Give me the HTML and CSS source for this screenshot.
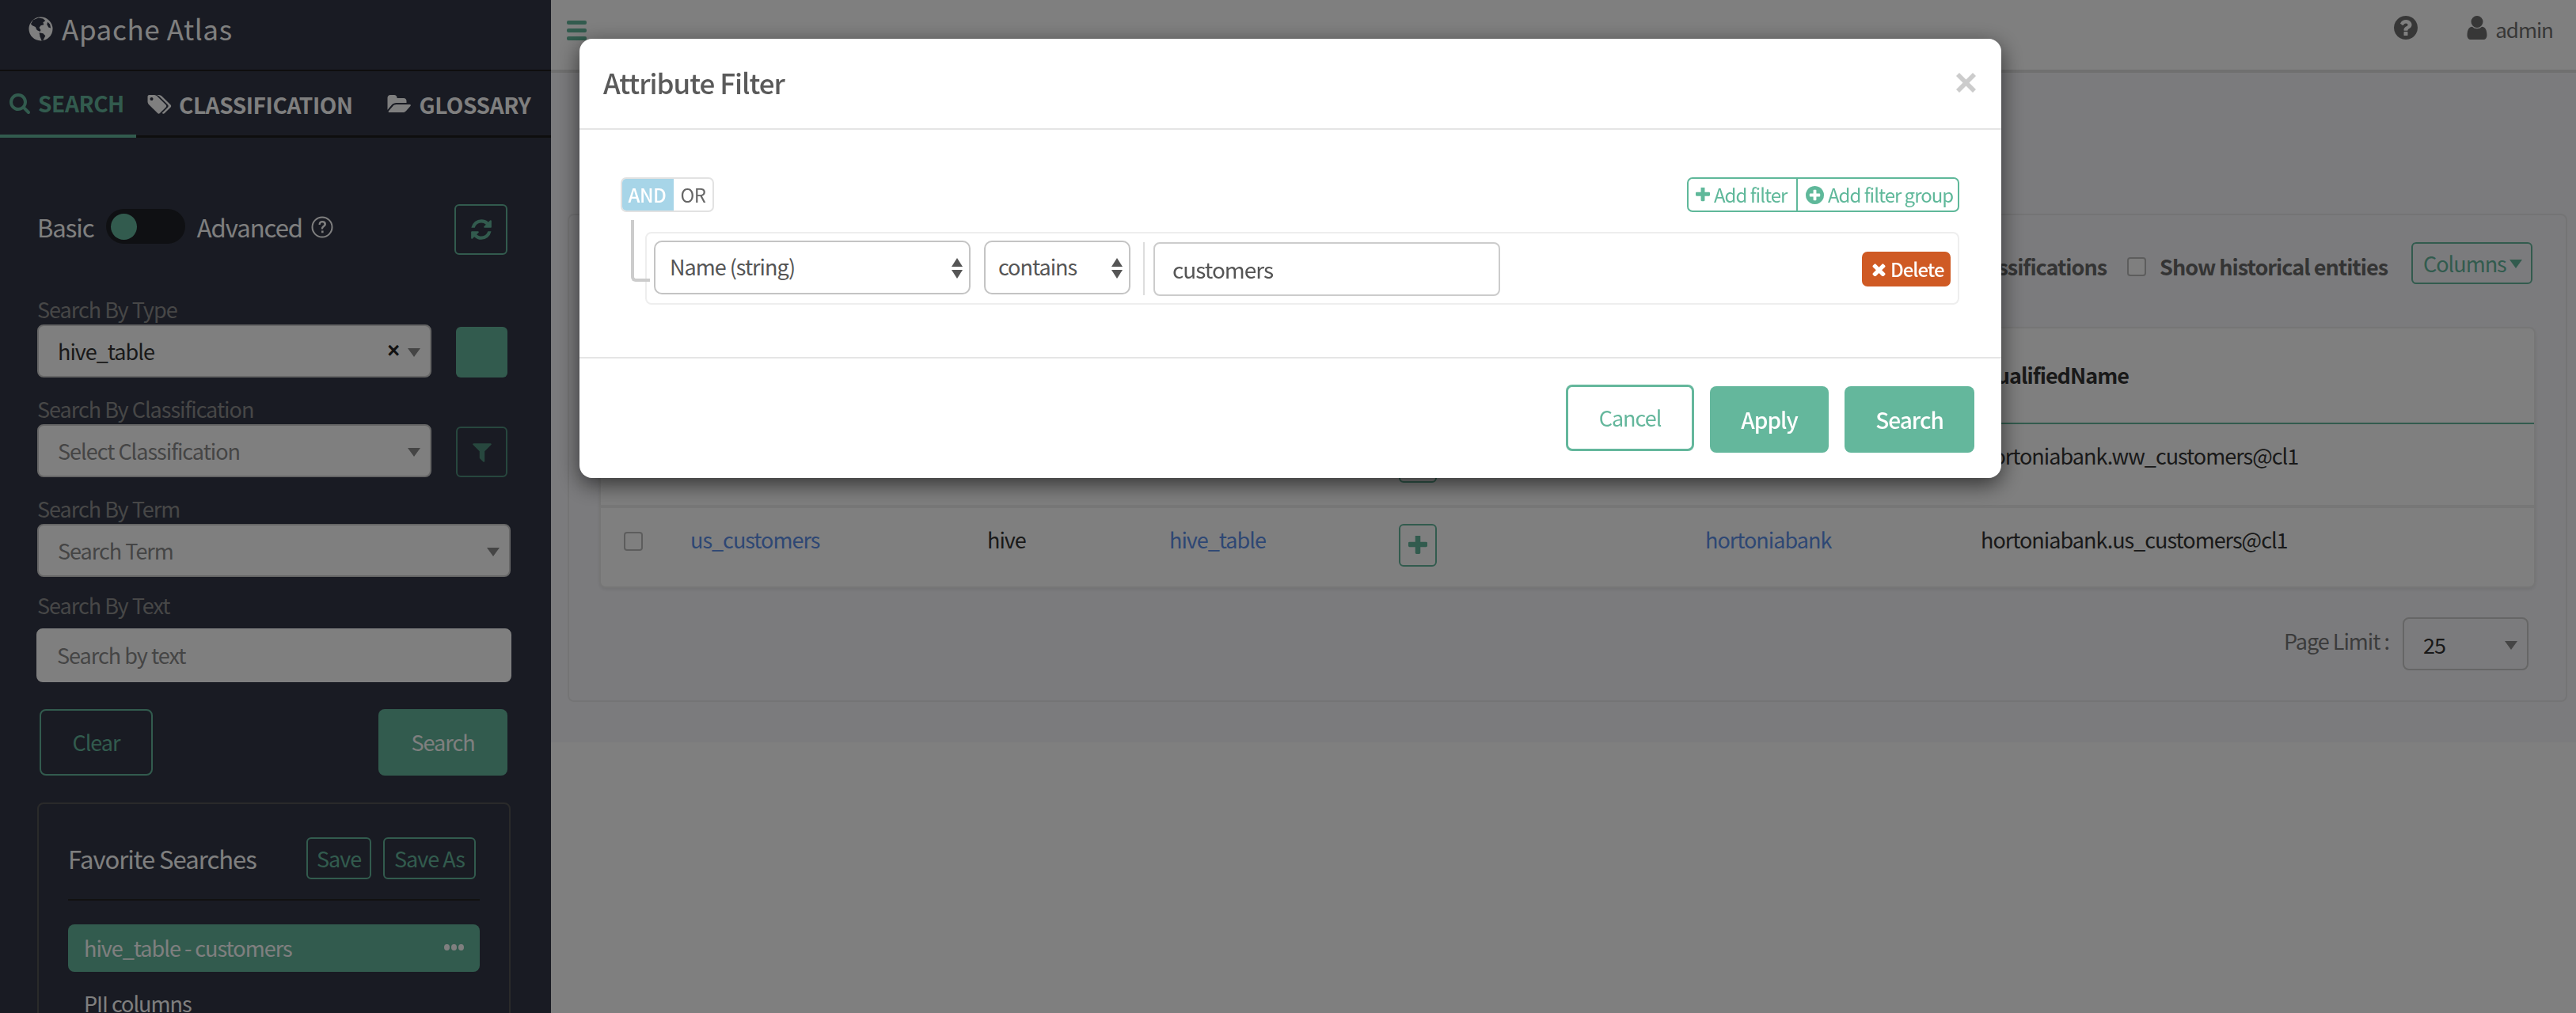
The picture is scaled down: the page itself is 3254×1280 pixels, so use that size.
FILE: index.html
```html
<!DOCTYPE html>
<html lang="en">
<head>
  <meta charset="UTF-8" />
  <title>Apache Atlas</title>
  <link rel="stylesheet" href="styles.css">
</head>
<body>
  <div class="app">
    <aside class="sidebar">
      <div class="brand">
        <svg class="globe" viewBox="0 0 32 32"><circle cx="16" cy="16" r="15.5" fill="#fff"/><path d="M13 1.500l6 1 3 3-3 2 1 3-4 1-2 3 2 3-1 2-4-2-2-4-4-2-2-2 3-5z" fill="#323746"/><path d="M14 21l5 1 3 3-3 6-2 0-2-5z" fill="#323746"/><path d="M25 7l3 3 1 5-3-1-2-4z" fill="#323746"/></svg>
        <span class="brand-name">Apache Atlas</span>
      </div>
      <nav class="tabs">
        <a class="tab tab-search active"><svg class="ico" viewBox="0 0 1792 1792"><path d="M1216 832q0-185-131.500-316.500t-316.500-131.500-316.500 131.500-131.500 316.500 131.500 316.500 316.500 131.500 316.500-131.500 131.500-316.500zm512 832q0 52-38 90t-90 38q-54 0-90-38l-343-342q-179 124-399 124-143 0-273.500-55.500t-225-150-150-225-55.500-273.500 55.500-273.500 150-225 225-150 273.500-55.500 273.500 55.500 225 150 150 225 55.500 273.500q0 220-124 399l343 343q37 37 37 90z"/></svg>SEARCH</a>
        <a class="tab tab-class"><svg class="ico" viewBox="0 0 1984 1792"><path d="M512 448q0-53-37.500-90.500t-90.500-37.500-90.500 37.500-37.500 90.500 37.500 90.500 90.500 37.500 90.500-37.500 37.500-90.500zm1067 576q0 53-37 90l-491 492q-39 37-91 37-53 0-90-37l-715-716q-38-37-64.500-101t-26.500-117v-416q0-52 38-90t90-38h416q53 0 117 26.500t102 64.500l715 714q37 39 37 91zm384 0q0 53-37 90l-491 492q-39 37-91 37-36 0-59-14t-53-45l470-470q37-37 37-90 0-52-37-91l-715-714q-38-38-102-64.500t-117-26.500h224q53 0 117 26.500t102 64.500l715 714q37 39 37 91z"/></svg>CLASSIFICATION</a>
        <a class="tab tab-gloss"><svg class="ico" viewBox="0 0 1920 1792"><path d="M1879 952q0 31-31 66l-336 396q-43 51-120.500 86.500t-143.500 35.500h-1088q-34 0-60.500-13t-26.500-43q0-31 31-66l336-396q43-51 120.500-86.500t143.500-35.500h1088q34 0 60.500 13t26.500 43zm-343-344v160h-832q-94 0-197 47.500t-164 119.500l-337 396-5 6q0-4-.5-12.500t-.5-12.500v-960q0-92 66-158t158-66h320q92 0 158 66t66 158v32h544q92 0 158 66t66 158z"/></svg>GLOSSARY</a>
      </nav>
      <div class="side-body">
        <div class="mode-row">
          <span class="mode-label">Basic</span>
          <span class="switch"><span class="knob"></span></span>
          <span class="mode-label adv">Advanced</span>
          <svg class="q-outline" viewBox="0 0 28 28"><circle cx="14" cy="14" r="12.500" fill="none" stroke="#fff" stroke-width="2"/><path d="M9.500 11q0-5 4.700-5 4.800 0 4.800 4.300 0 2.400-2.500 3.700-1.500.8-1.500 2.500h-2.300q0-3 2-4.300 1.700-1 1.700-2 0-1.900-2.600-1.900-2 0-2.200 2.700zM13 18.500h2.600v2.800H13z" fill="#fff"/></svg>
          <button class="btn-square outline refresh"><svg class="ico" viewBox="0 0 1792 1792"><path d="M1639 1056q0 5-1 7-64 268-268 434.500t-478 166.500q-146 0-282.500-55t-243.500-157l-129 129q-19 19-45 19t-45-19-19-45v-448q0-26 19-45t45-19h448q26 0 45 19t19 45-19 45l-137 137q71 66 161 102t187 36q134 0 250-65t186-179q11-17 53-117 8-23 30-23h192q13 0 22.500 9.500t9.500 22.500zm25-800v448q0 26-19 45t-45 19h-448q-26 0-45-19t-19-45 19-45l138-138q-148-137-349-137-134 0-250 65t-186 179q-11 17-53 117-8 23-30 23h-199q-13 0-22.500-9.500t-9.500-22.500v-7q65-268 270-434.500t480-166.500q146 0 284 55.500t245 156.500l130-129q19-19 45-19t45 19 19 45z"/></svg></button>
        </div>

        <div class="field first">
          <label class="field-label">Search By Type</label>
          <div class="field-row">
            <div class="combo short value">hive_table<span class="clear-x">×</span><i class="caret"></i></div>
            <button class="btn-square solid"></button>
          </div>
        </div>
        <div class="field">
          <label class="field-label">Search By Classification</label>
          <div class="field-row">
            <div class="combo short">Select Classification<i class="caret"></i></div>
            <button class="btn-square outline dim"><svg class="ico" viewBox="0 0 1792 1792"><path d="M1595 295q17 41-14 70l-493 493v742q0 42-39 59-13 5-25 5-27 0-45-19l-256-256q-19-19-19-45v-486l-493-493q-31-29-14-70 17-39 59-39h1280q42 0 59 39z"/></svg></button>
          </div>
        </div>
        <div class="field">
          <label class="field-label">Search By Term</label>
          <div class="combo">Search Term<i class="caret"></i></div>
        </div>
        <div class="field text-field">
          <label class="field-label">Search By Text</label>
          <div class="combo plain">Search by text</div>
        </div>

        <div class="side-actions">
          <button class="btn outline clear-btn">Clear</button>
          <button class="btn solid search-btn">Search</button>
        </div>

        <section class="favs">
          <div class="favs-head">
            <h3>Favorite Searches</h3>
            <button class="btn-small save">Save</button>
            <button class="btn-small save-as">Save As</button>
          </div>
          <ul class="favs-list">
            <li class="selected">hive_table - customers<span class="dots"><b></b><b></b><b></b></span></li>
            <li>PII columns</li>
          </ul>
        </section>
      </div>
    </aside>

    <main class="main">
      <header class="topbar">
        <span class="burger"><b></b><b></b><b></b></span>
        <svg class="help" viewBox="128 128 1536 1536"><path d="M1024 1376v-192q0-14-9-23t-23-9h-192q-14 0-23 9t-9 23v192q0 14 9 23t23 9h192q14 0 23-9t9-23zm256-672q0-88-55.500-163t-138.500-116-170-41q-243 0-371 213-15 24 8 42l132 100q7 6 19 6 16 0 25-12 53-68 86-92 34-24 86-24 48 0 85.500 26t37.500 59q0 38-20 61t-68 45q-63 28-115.500 86.500t-52.500 125.500v36q0 14 9 23t23 9h192q14 0 23-9t9-23q0-19 21.500-49.500t54.500-49.500q32-18 49-28.500t46-35 44.500-48 28-60.500 12.500-81zm384 192q0 209-103 385.500t-279.500 279.500-385.500 103-385.500-103-279.500-279.500-103-385.500 103-385.500 279.500-279.500 385.500-103 385.500 103 279.500 279.500 103 385.500z"/></svg>
        <svg class="user" viewBox="256 128 1280 1536"><path d="M1536 1399q0 109-62.500 187t-150.500 78h-854q-88 0-150.500-78t-62.500-187q0-85 8.500-160.500t31.500-152 58.500-131 94-89 134.500-34.500q131 128 313 128t313-128q76 0 134.500 34.500t94 89 58.500 131 31.500 152 8.500 160.500zm-256-887q0 159-112.500 271.500t-271.500 112.500-271.500-112.500-112.500-271.500 112.500-271.500 271.500-112.500 271.500 112.500 112.500 271.500z"/></svg>
        <span class="username">admin</span>
      </header>

      <div class="content">
        <section class="card">
          <div class="toolbar">
            <span class="check"></span><span class="tool-label">Exclude sub-classifications</span>
            <span class="check hist"></span><span class="tool-label">Show historical entities</span>
            <button class="columns">Columns<i class="caret up"></i></button>
          </div>
          <div class="results">
            <div class="row head">
              <span></span><span>Name</span><span>Owner</span><span>Type</span><span>Classifications</span><span>DB</span><span>QualifiedName</span>
            </div>
            <div class="row">
              <span class="check"></span><a>ww_customers</a><span>hive</span><a>hive_table</a><span><button class="add"><svg viewBox="192 192 1408 1408"><path d="M1600 736v192q0 40-28 68t-68 28h-416v416q0 40-28 68t-68 28h-192q-40 0-68-28t-28-68v-416h-416q-40 0-68-28t-28-68v-192q0-40 28-68t68-28h416v-416q0-40 28-68t68-28h192q40 0 68 28t28 68v416h416q40 0 68 28t28 68z"/></svg></button></span><a>hortoniabank</a><span>hortoniabank.ww_customers@cl1</span>
            </div>
            <div class="row last">
              <span class="check"></span><a>us_customers</a><span>hive</span><a>hive_table</a><span><button class="add"><svg viewBox="192 192 1408 1408"><path d="M1600 736v192q0 40-28 68t-68 28h-416v416q0 40-28 68t-68 28h-192q-40 0-68-28t-28-68v-416h-416q-40 0-68-28t-28-68v-192q0-40 28-68t68-28h416v-416q0-40 28-68t68-28h192q40 0 68 28t28 68v416h416q40 0 68 28t28 68z"/></svg></button></span><a>hortoniabank</a><span>hortoniabank.us_customers@cl1</span>
            </div>
          </div>
          <div class="pager">
            <span class="pager-label">Page Limit :</span>
            <div class="page-size">25<i class="caret"></i></div>
          </div>
        </section>
      </div>
    </main>
  </div>

  <div class="backdrop"></div>

  <div class="modal">
    <div class="modal-head">
      <h2>Attribute Filter</h2>
      <svg class="modal-close" viewBox="0 0 25 25"><path d="M4 0l8.500 8.500L21 0l4 4-8.500 8.500L25 21l-4 4-8.500-8.500L4 25l-4-4 8.500-8.500L0 4z"/></svg>
    </div>
    <div class="modal-body">
      <div class="group-bar">
        <div class="conds"><span class="cond on">AND</span><span class="cond">OR</span></div>
        <div class="adders">
          <a class="adder first-add"><svg viewBox="192 192 1408 1408"><path d="M1600 736v192q0 40-28 68t-68 28h-416v416q0 40-28 68t-68 28h-192q-40 0-68-28t-28-68v-416h-416q-40 0-68-28t-28-68v-192q0-40 28-68t68-28h416v-416q0-40 28-68t68-28h192q40 0 68 28t28 68v416h416q40 0 68 28t28 68z"/></svg>Add filter</a>
          <a class="adder"><svg class="round" viewBox="128 128 1536 1536"><path d="M1344 960v-128q0-26-19-45t-45-19h-256v-256q0-26-19-45t-45-19h-128q-26 0-45 19t-19 45v256h-256q-26 0-45 19t-19 45v128q0 26 19 45t45 19h256v256q0 26 19 45t45 19h128q26 0 45-19t19-45v-256h256q26 0 45-19t19-45zm320-64q0 209-103 385.500t-279.500 279.500-385.500 103-385.500-103-279.500-279.500-103-385.500 103-385.500 279.500-279.500 385.500-103 385.500 103 279.500 279.500 103 385.500z"/></svg>Add filter group</a>
        </div>
      </div>
      <div class="rule">
        <div class="pick pick-attr">Name (string)<i class="spin"></i></div>
        <div class="pick pick-op">contains<i class="spin"></i></div>
        <div class="rule-sep"></div>
        <div class="rule-input">customers</div>
        <button class="delete"><svg viewBox="266 266 1260 1260"><path d="M1490 1322q0 40-28 68l-136 136q-28 28-68 28t-68-28l-294-294-294 294q-28 28-68 28t-68-28l-136-136q-28-28-28-68t28-68l294-294-294-294q-28-28-28-68t28-68l136-136q28-28 68-28t68 28l294 294 294-294q28-28 68-28t68 28l136 136q28 28 28 68t-28 68l-294 294 294 294q28 28 28 68z"/></svg>Delete</button>
      </div>
    </div>
    <div class="modal-foot">
      <button class="foot-btn cancel">Cancel</button>
      <button class="foot-btn apply">Apply</button>
      <button class="foot-btn run">Search</button>
    </div>
  </div>
</body>
</html>
```

FILE: styles.css
```css
* { box-sizing: border-box; margin: 0; padding: 0; }
html, body { height: 100%; overflow: hidden; }
body { font-family: "Noto Sans CJK SC", "Noto Sans", sans-serif; background: #fff; color: #333; font-size: 27px; line-height: 40px; letter-spacing: -1px; }
button { font: inherit; letter-spacing: inherit; background: none; border: none; }
ul { list-style: none; }
.app { display: flex; height: 1280px; }

/* sidebar */
.sidebar { width: 696px; flex: none; background: #323746; color: #fff; overflow: hidden; }
.brand { height: 90px; border-bottom: 2px solid #1c1c1c; display: flex; align-items: center; padding: 0 0 16px 36px; }
.globe { width: 31px; height: 31px; margin-right: 11px; }
.brand-name { font-size: 35px; letter-spacing: .6px; line-height: 40px; }
.tabs { height: 84px; border-bottom: 3px solid #1c1c1c; display: flex; }
.tab { height: 84px; display: flex; align-items: center; font-size: 28px; font-weight: 700; letter-spacing: -.4px; fill: #fff; }
.tab .ico { width: 28px; height: 28px; margin-right: 9px; }
.tab-search { width: 172px; padding-left: 11px; color: #64b79c; fill: #64b79c; border-bottom: 4px solid #64b79c; }
.tab-class { margin-left: 13px; }
.tab-class .ico { width: 32px; }
.tab-gloss { margin-left: 44px; }
.tab-gloss .ico { width: 31px; }
.side-body { padding: 84px 0 0 47px; width: 645px; }
.mode-row { display: flex; align-items: center; height: 64px; width: 594px; }
.mode-label { font-size: 31px; line-height: 40px; margin-top: -6px; }
.switch { width: 100px; height: 44px; background: #1f2026; border-radius: 22px; margin: -8px 15px 0; padding: 6px; }
.knob { display: block; width: 33px; height: 33px; background: #64b79c; border-radius: 50%; }
.q-outline { width: 28px; height: 28px; margin: -6px 0 0 11px; }
.btn-square { width: 65px; height: 64px; border-radius: 6px; display: flex; align-items: center; justify-content: center; margin-left: auto; flex: none; }
.btn-square .ico { width: 30px; height: 30px; fill: #64b79c; }
.outline { border: 2px solid #64b79c; color: #64b79c; }
.solid { background: #64b79c; }
.dim { border-color: #4f8f7c; }
.dim .ico { fill: #4f8f7c; }
.refresh { width: 67px; }

.field { margin-top: 21px; width: 598px; }
.field.first { margin-top: 50px; }
.field.text-field { margin-top: 17px; }
.field.text-field .field-label { margin-bottom: 10px; }
.field-label { display: block; line-height: 38px; color: #8e8e8e; }
.field-row { display: flex; align-items: flex-end; width: 594px; }
.combo { position: relative; height: 67px; background: #fff; border: 2px solid #ccc; border-radius: 8px; padding-left: 24px; line-height: 63px; color: #8a8a8a; }
.combo.short { width: 498px; }
.combo.value { color: #333; }
.combo.plain { height: 68px; width: 600px; margin-left: -1px; border-color: #fff; line-height: 64px; }
.caret { position: absolute; right: 12px; top: 28px; width: 0; height: 0; border: 8px solid transparent; border-top: 11px solid #8a8a8a; border-bottom: 0; }
.clear-x { position: absolute; right: 39px; top: 0; color: #222; font-family: "Liberation Sans", sans-serif; font-weight: 700; font-size: 27px; }

.side-actions { display: flex; justify-content: space-between; margin: 34px 0 0 3px; width: 591px; align-items: flex-start; }
.btn { border-radius: 8px; height: 84px; }
.clear-btn { width: 143px; }
.search-btn { width: 163px; color: #fff; }
.favs { margin-top: 34px; width: 598px; height: 300px; border: 2px solid #555; border-radius: 8px; padding: 42px 37px 0 37px; }
.favs-head { display: flex; align-items: center; height: 53px; }
.favs-head h3 { font-size: 31px; font-weight: 400; line-height: 40px; margin-right: auto; }
.btn-small { height: 53px; border: 2px solid #64b79c; border-radius: 6px; color: #64b79c; line-height: 40px; }
.save { width: 82px; }
.save-as { width: 117px; margin: 0 5px 0 15px; }
.favs-list { border-top: 2px solid #222; margin-top: 25px; padding-top: 30px; }
.favs-list li { height: 60px; margin-bottom: 10px; padding-left: 20px; line-height: 60px; border-radius: 8px; position: relative; }
.favs-list li:last-child { padding-top: 18px; line-height: 24px; }
.favs-list .selected { background: #64b79c; }
.dots { position: absolute; right: 20px; top: 25px; display: flex; gap: 2px; }
.dots b { width: 7px; height: 8px; background: #fff; border-radius: 50%; }

/* main */
.main { flex: 1; min-width: 0; }
.topbar { height: 92px; background: #fff; border-bottom: 4px solid #e0e0e0; display: flex; align-items: flex-start; padding: 20px 29px 0 20px; }
.burger { display: flex; flex-direction: column; gap: 5px; width: 25px; margin: 6px auto 0 0; }
.burger b { height: 5px; background: #64b79c; border-radius: 2px; }
.help { width: 30px; height: 30px; fill: #6e6e6e; margin-right: 62px; }
.user { width: 26px; height: 30px; fill: #6e6e6e; margin-right: 10px; }
.username { font-size: 26px; line-height: 36px; color: #6e6e6e; margin-top: -1px; }
.content { background: #f7f7fb; padding: 178px 11px 51px 21px; }
.card { height: 617px; border: 2px solid #e8e8ea; border-radius: 8px; padding: 0 38px; }
.toolbar { height: 141px; padding: 34px 4px 0 0; display: flex; justify-content: flex-end; align-items: flex-start; }
.check { display: block; width: 24px; height: 24px; border: 2px solid #bbb; border-radius: 4px; background: #fff; flex: none; }
.toolbar .check { margin: 19px 0 0 26px; }
.toolbar .check:first-child { margin-left: 0; }
.tool-label { font-weight: 700; line-height: 40px; color: #686868; margin: 11px 0 0 17px; white-space: nowrap; }
.columns { width: 153px; height: 53px; margin-left: 30px; border: 2px solid #64b79c; border-radius: 6px; color: #64b79c; font-size: 27px; position: relative; text-align: left; padding-left: 13px; line-height: 44px; }
.caret.up { top: 20px; right: 11px; border-top-color: #64b79c; }
.results { height: 330px; background: #fff; border: 2px solid #ededed; border-radius: 8px; box-shadow: 0 2px 4px rgba(0,0,0,.08); }
.row { display: grid; grid-template-columns: 29px 84px 375px 230px 290px 387px 348px 1fr; height: 106px; border-bottom: 4px solid #eee; padding-top: 20px; line-height: 40px; color: #333; }
.row::before { content: ""; }
.row a { color: #5c8fe8; }
.row > .check { margin-top: 10px; }
.row.head { height: 121px; border-bottom: 2px solid #64b79c; padding-top: 39px; font-weight: 700; }
.row.last { border-bottom: 0; height: 99px; }
.add { width: 48px; height: 54px; border: 2px solid #64b79c; border-radius: 6px; background: #fff; display: flex; align-items: center; justify-content: center; }
.add svg { width: 24px; height: 24px; fill: #64b79c; }
.pager { display: flex; justify-content: flex-end; align-items: flex-start; margin: 37px 9px 0 0; }
.pager-label { line-height: 40px; color: #777; margin: 10px 17px 0 0; }
.page-size { position: relative; width: 159px; height: 67px; border: 2px solid #ccc; border-radius: 8px; padding-left: 24px; line-height: 66px; color: #333; }

/* modal */
.backdrop { position: fixed; inset: 0; background: rgba(0,0,0,.5); }
.modal { position: fixed; left: 732px; top: 49px; width: 1796px; height: 555px; background: #fff; border-radius: 16px; box-shadow: 0 8px 28px rgba(0,0,0,.6); }
.modal-head { height: 115px; border-bottom: 2px solid #e5e5e5; display: flex; align-items: center; padding: 0 32px 0 30px; justify-content: space-between; }
.modal-head h2 { font-size: 35px; font-weight: 500; line-height: 44px; color: #5a5a5a; margin-top: -4px; }
.modal-close { width: 25px; height: 25px; fill: #ccc; margin-top: -3px; }
.modal-body { height: 287px; padding: 60px 53px 0 52px; }
.group-bar { display: flex; justify-content: space-between; height: 44px; }
.conds { display: flex; width: 118px; border: 2px solid #e2e2e2; border-radius: 7px; overflow: hidden; }
.cond { flex: 1; text-align: center; font-size: 24px; letter-spacing: -.5px; line-height: 39px; color: #666; }
.cond.on { flex: none; width: 67px; margin: -2px 0 -2px -2px; background: #a7d5e8; color: #fff; font-weight: 500; line-height: 43px; }
.adders { display: flex; width: 344px; border: 2px solid #5fb89a; border-radius: 7px; height: 44px; color: #5fb89a; font-size: 24px; line-height: 38px; }
.adder { display: flex; align-items: center; padding-left: 9px; fill: #5fb89a; height: 40px; white-space: nowrap; }
.first-add { width: 136px; }
.adder + .adder { flex: 1; border-left: 2px solid #5fb89a; padding-left: 10px; }
.adder svg { width: 18px; height: 18px; margin-right: 5px; flex: none; }
.adder svg.round { width: 23px; height: 23px; }
.rule { position: relative; display: flex; align-items: flex-start; margin: 25px 0 0 31px; height: 92px; border: 2px solid #eee; border-radius: 8px; padding: 9px 9px 0 9px; }
.rule::before { content: ""; position: absolute; left: -20px; top: -17px; width: 20px; height: 74px; border-left: 4px solid #ccc; border-bottom: 4px solid #ccc; border-bottom-left-radius: 6px; }
.pick { position: relative; height: 68px; background: #fff; border: 2px solid #c4c4c4; border-radius: 10px; line-height: 62px; color: #555; }
.pick-attr { width: 400px; padding-left: 18px; }
.pick-op { width: 185px; padding-left: 16px; margin-left: 17px; }
.spin { position: absolute; right: 8px; top: 20px; width: 0; height: 0; border: 7px solid transparent; border-bottom: 11px solid #555; border-top: 0; }
.spin::after { content: ""; position: absolute; left: -7px; top: 15px; width: 0; height: 0; border: 7px solid transparent; border-top: 11px solid #555; border-bottom: 0; }
.rule-sep { width: 2px; height: 67px; background: #ddd; margin: 2px 11px 0 16px; }
.rule-input { width: 438px; height: 68px; border: 2px solid #ccc; border-radius: 8px; margin-top: 2px; padding-left: 22px; font-size: 28px; line-height: 64px; color: #555; }
.delete { display: flex; align-items: center; margin: 14px 0 0 auto; width: 112px; height: 44px; background: #cf5a24; border-radius: 7px; color: #fff; font-size: 24px; font-weight: 500; padding-left: 13px; fill: #fff; line-height: 40px; }
.delete svg { width: 17px; height: 17px; margin-right: 6px; }
.modal-foot { height: 153px; border-top: 2px solid #e5e5e5; display: flex; align-items: flex-start; justify-content: flex-end; padding: 33px 34px 0 0; }
.foot-btn { height: 84px; border-radius: 8px; font-size: 28px; font-weight: 500; margin-top: 2px; background: #64b79c; color: #fff; }
.cancel { width: 162px; margin: 0 20px 0 0; background: #fff; border: 3px solid #64b79c; color: #64b79c; font-size: 27px; font-weight: 400; }
.apply { width: 150px; margin-right: 20px; }
.run { width: 164px; }
```
